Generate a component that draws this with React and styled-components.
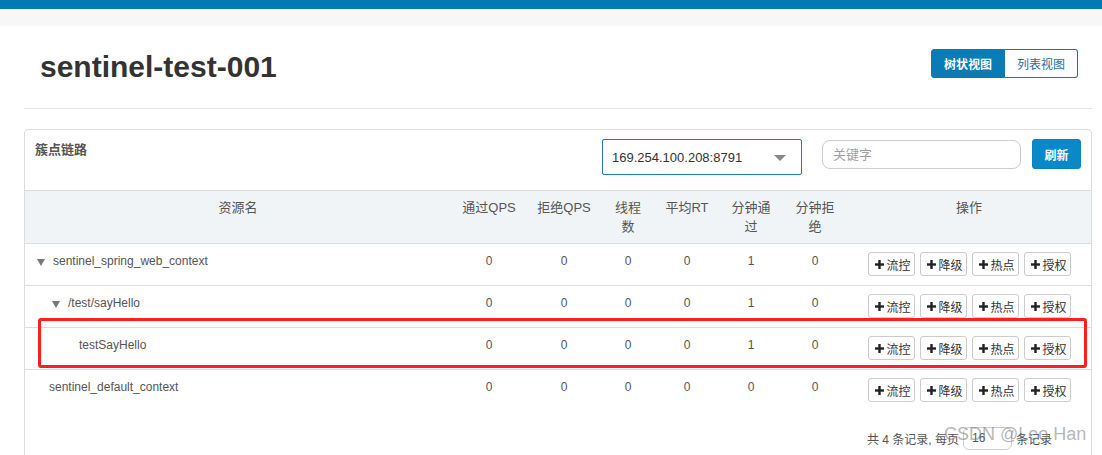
import React from "react";
import styled, { createGlobalStyle } from "styled-components";

const FONT = `"Liberation Sans", Arial, "Noto Sans CJK SC", sans-serif`;

const COLS = [
  { key: "name", title: "资源名", width: 426 },
  { key: "passQps", title: "通过QPS", width: 76 },
  { key: "blockQps", title: "拒绝QPS", width: 74 },
  { key: "threads", title: "线程数", width: 54 },
  { key: "rt", title: "平均RT", width: 64 },
  { key: "minPass", title: "分钟通过", width: 64 },
  { key: "minBlock", title: "分钟拒绝", width: 64 },
  { key: "ops", title: "操作", width: 244 },
];

const ROWS = [
  { name: "sentinel_spring_web_context", depth: 0, branch: true, v: [0, 0, 0, 0, 1, 0] },
  { name: "/test/sayHello", depth: 1, branch: true, v: [0, 0, 0, 0, 1, 0] },
  { name: "testSayHello", depth: 2, branch: false, v: [0, 0, 0, 0, 1, 0] },
  { name: "sentinel_default_context", depth: 0, branch: false, v: [0, 0, 0, 0, 0, 0] },
];

const OPS = ["流控", "降级", "热点", "授权"];

const GlobalStyle = createGlobalStyle`
  html, body {
    margin: 0;
    padding: 0;
    background: #fff;
    font-family: ${FONT};
    color: #333;
  }
  * { box-sizing: border-box; }
`;

function PlusIcon() {
  return (
    <svg width="9" height="9" viewBox="0 0 9 9" aria-hidden="true">
      <rect x="3.3" y="0" width="2.4" height="9" fill="#222" />
      <rect x="0" y="3.3" width="9" height="2.4" fill="#222" />
    </svg>
  );
}

export default function App() {
  return (
    <Root>
      <GlobalStyle />
      <TopBar />
      <SubBar />
      <Page>
        <HeaderRow>
          <Title>sentinel-test-001</Title>
          <ToggleGroup>
            <ToggleBtn active>树状视图</ToggleBtn>
            <ToggleBtn>列表视图</ToggleBtn>
          </ToggleGroup>
        </HeaderRow>

        <Panel>
          <PanelHeading>
            <PanelTitle>簇点链路</PanelTitle>
            <Controls>
              <MachineSelect>
                <span>169.254.100.208:8791</span>
                <Caret />
              </MachineSelect>
              <SearchInput placeholder="关键字" />
              <RefreshBtn>刷新</RefreshBtn>
            </Controls>
          </PanelHeading>

          <Table>
            <colgroup>
              {COLS.map((c) => (
                <col key={c.key} style={{ width: c.width }} />
              ))}
            </colgroup>
            <thead>
              <tr>
                {COLS.map((c) => (
                  <Th key={c.key}>{c.title}</Th>
                ))}
              </tr>
            </thead>
            <tbody>
              {ROWS.map((r) => (
                <Tr key={r.name}>
                  <NameCell>
                    <NameWrap
                      style={{
                        paddingLeft: r.branch ? 12 + r.depth * 15 : 24 + r.depth * 15,
                      }}
                    >
                      {r.branch && <TreeArrow />}
                      {r.name}
                    </NameWrap>
                  </NameCell>
                  {r.v.map((n, i) => (
                    <NumCell key={i}>{n}</NumCell>
                  ))}
                  <OpsCell>
                    <OpsRow>
                      {OPS.map((o) => (
                        <OpBtn key={o}>
                          <PlusIcon />
                          {o}
                        </OpBtn>
                      ))}
                    </OpsRow>
                  </OpsCell>
                </Tr>
              ))}
            </tbody>
          </Table>

          <Pager>
            共 4 条记录, 每页
            <PageSize value="16" readOnly />
            条记录
          </Pager>

          <Highlight />
        </Panel>
      </Page>
      <Watermark>CSDN @Leo Han</Watermark>
    </Root>
  );
}

/* ====================== styles ====================== */

const Root = styled.div`
  position: relative;
  width: 1102px;
  height: 455px;
  overflow: hidden;
`;

const TopBar = styled.div`
  height: 9px;
  background: #0079b5;
`;

const SubBar = styled.div`
  height: 17px;
  background: #f7f7f7;
`;

const Page = styled.div`
  padding: 0 10px 0 24px;
`;

const HeaderRow = styled.div`
  display: flex;
  align-items: center;
  justify-content: space-between;
  height: 83px;
  border-bottom: 1px solid #e5e5e5;
  padding: 0 14px 10px 16px;
`;

const Title = styled.h1`
  margin: 10px 0 0;
  font-size: 30px;
  font-weight: 700;
  color: #333;
`;

const ToggleGroup = styled.div`
  display: flex;
  margin-top: 2px;
`;

const ToggleBtn = styled.button`
  width: ${({ active }) => (active ? "74px" : "73px")};
  height: 29px;
  padding: 0;
  font-family: ${FONT};
  font-size: 12px;
  font-weight: ${({ active }) => (active ? 700 : 400)};
  color: ${({ active }) => (active ? "#fff" : "#1d6fa5")};
  background: ${({ active }) => (active ? "#0a7bb5" : "#fff")};
  border: 1px solid #0a7bb5;
  border-radius: ${({ active }) => (active ? "3px 0 0 3px" : "0 3px 3px 0")};
  border-left-width: ${({ active }) => (active ? "1px" : "0")};
`;

const Panel = styled.div`
  position: relative;
  margin-top: 20px;
  height: 400px;
  border: 1px solid #ddd;
  border-radius: 4px;
`;

const PanelHeading = styled.div`
  display: flex;
  align-items: flex-start;
  justify-content: space-between;
  height: 60px;
  padding: 9px 10px 0 10px;
`;

const PanelTitle = styled.div`
  margin-top: 2px;
  font-size: 13px;
  font-weight: 700;
  color: #555;
  line-height: 18px;
`;

const Controls = styled.div`
  display: flex;
  align-items: flex-start;
`;

const MachineSelect = styled.div`
  display: flex;
  align-items: center;
  justify-content: space-between;
  width: 200px;
  height: 36px;
  padding: 0 15px 0 9px;
  border: 1px solid #2378b1;
  border-radius: 2px;
  font-size: 13px;
  color: #333;
  background: #fff;
`;

const Caret = styled.span`
  width: 0;
  height: 0;
  margin-top: 2px;
  border-left: 6px solid transparent;
  border-right: 6px solid transparent;
  border-top: 6px solid #888;
`;

const SearchInput = styled.input`
  width: 199px;
  height: 29px;
  margin: 1px 0 0 20px;
  padding: 0 10px;
  border: 1px solid #ccc;
  border-radius: 8px;
  font-family: ${FONT};
  font-size: 13px;
  color: #333;
  outline: none;

  &::placeholder {
    color: #a0a0a0;
  }
`;

const RefreshBtn = styled.button`
  width: 49px;
  height: 30px;
  margin-left: 11px;
  padding: 0;
  font-family: ${FONT};
  font-size: 12px;
  font-weight: 700;
  color: #fff;
  background: #0a89c9;
  border: 1px solid #0a82c0;
  border-radius: 3px;
`;

const Table = styled.table`
  width: 100%;
  table-layout: fixed;
  border-collapse: collapse;
  font-size: 12px;
  color: #555;
`;

const Th = styled.th`
  padding: 7px 8px 7px;
  vertical-align: top;
  text-align: center;
  font-size: 13px;
  font-weight: 400;
  line-height: 19px;
  color: #555;
  background: #f1f4f7;
  border-top: 1px solid #ddd;
  border-bottom: 1px solid #ddd;
`;

const Tr = styled.tr`
  & + & td {
    border-top: 1px solid #ddd;
  }
`;

const NameCell = styled.td`
  height: 42px;
  padding: 8px 0;
  vertical-align: top;
  line-height: 18px;
`;

const NameWrap = styled.div`
  display: flex;
  align-items: center;
`;

const TreeArrow = styled.span`
  width: 0;
  height: 0;
  margin: 2px 8px 0 0;
  border-left: 4.5px solid transparent;
  border-right: 4.5px solid transparent;
  border-top: 7px solid #777;
`;

const NumCell = styled.td`
  padding: 8px 4px;
  vertical-align: top;
  text-align: center;
  line-height: 18px;
`;

const OpsCell = styled.td`
  padding: 8px 4px 0;
  vertical-align: top;
`;

const OpsRow = styled.div`
  display: flex;
  justify-content: center;
  gap: 5px;
`;

const OpBtn = styled.button`
  display: inline-flex;
  align-items: center;
  gap: 3px;
  width: 47px;
  height: 24px;
  padding: 0 0 0 6px;
  font-family: ${FONT};
  font-size: 12px;
  color: #333;
  background: #fff;
  border: 1px solid #ccc;
  border-radius: 3px;
`;

const Pager = styled.div`
  display: flex;
  align-items: center;
  justify-content: flex-end;
  gap: 4px;
  padding: 15px 39px 0 0;
  font-size: 12px;
  color: #555;
`;

const PageSize = styled.input`
  width: 49px;
  height: 23px;
  padding: 0 8px;
  border: 1px solid #ccc;
  border-radius: 6px;
  font-family: ${FONT};
  font-size: 12px;
  color: #555;
`;

/* red annotation frame around the testSayHello row */
const Highlight = styled.div`
  position: absolute;
  left: 13px;
  top: 188px;
  width: 1049px;
  height: 50px;
  border: 3px solid #ff1f1f;
  border-radius: 3px;
  pointer-events: none;
`;

const Watermark = styled.div`
  position: absolute;
  left: 944px;
  top: 424px;
  font-family: ${FONT};
  font-size: 18px;
  color: rgba(120, 120, 120, 0.55);
  white-space: nowrap;
  pointer-events: none;
`;
